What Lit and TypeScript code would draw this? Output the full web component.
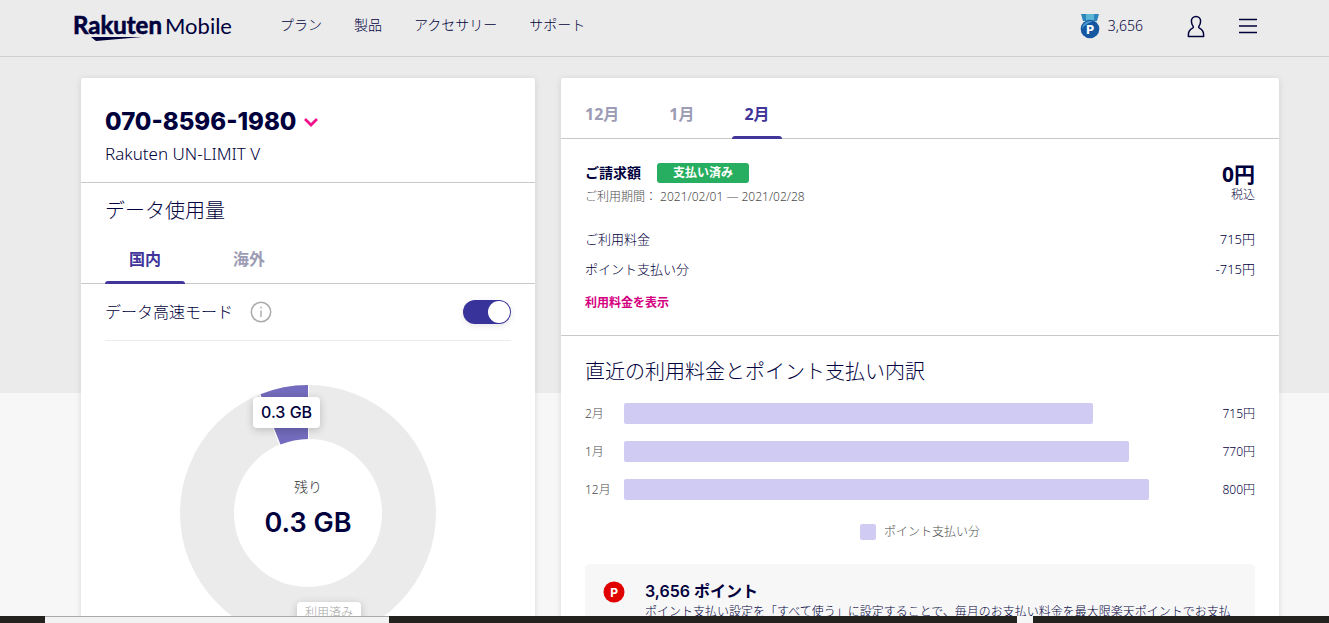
import { LitElement, html, css } from "lit";
import { customElement, state } from "lit/decorators.js";

const base = css`
  * { box-sizing: border-box; margin: 0; padding: 0; }
  :host {
    display: block;
    color: #00003c;
    font-family: "Noto Sans", "Noto Sans CJK JP", sans-serif;
    font-weight: 300;
  }
  button { border: 0; background: none; color: inherit; font: inherit; cursor: pointer; }
  a { color: inherit; text-decoration: none; }
  svg { display: block; flex: none; }
`;

const tabStyles = css`
  .tabs { display: flex; border-bottom: 1px solid #c8c8c8; }
  .tab {
    margin-bottom: -1px;
    border-bottom: 3px solid transparent;
    color: #9c9cb4;
    font-size: 16px;
    font-weight: 700;
    line-height: 24px;
  }
  .tab.active { color: #41359a; position: relative; }
  .tab.active::after {
    content: "";
    position: absolute;
    left: 0;
    right: 0;
    bottom: -3px;
    height: 3px;
    border-radius: 3px 3px 0 0;
    background: #41359a;
  }
`;

@customElement("site-header")
class SiteHeader extends LitElement {
  static styles = [base, css`
    .bar {
      display: flex;
      align-items: center;
      height: 57px;
      padding: 0 72px 4px 73px;
      background: #ebebeb;
      border-bottom: 1px solid #cfcfcf;
    }
    .logo-text { font-family: Lato, sans-serif; fill: #00003c; }
    .strong { font-size: 24px; font-weight: 700; }
    .light { font-size: 22px; font-weight: 400; }
    .nav { display: flex; gap: 32px; margin-left: 48px; padding-bottom: 2px; font-size: 14px; line-height: 20px; }
    .tools { display: flex; align-items: center; margin-left: auto; }
    .points { display: flex; align-items: center; gap: 8px; margin-right: 44px; font-size: 14px; line-height: 20px; }
    .menu { margin-left: 34px; }
  `];

  render() {
    return html`
      <header class="bar">
        <a href="#" aria-label="Rakuten Mobile">
          <svg width="159" height="34" viewBox="0 0 159 34">
            <text class="logo-text strong" x="0" y="25" stroke="#00003c" stroke-width=".6">Rakuten</text>
            <text class="logo-text light" x="92" y="25">Mobile</text>
            <path d="M18 28H69L23 32Z" fill="#00003c" />
          </svg>
        </a>
        <nav class="nav">
          ${["プラン", "製品", "アクセサリー", "サポート"].map((t) => html`<a href="#">${t}</a>`)}
        </nav>
        <div class="tools">
          <a class="points" href="#">
            <svg width="20" height="26" viewBox="0 0 20 26">
              <path d="M1 1h18l-2 7H3z" fill="#2d86bb" />
              <path d="M6 1h8v8H6z" fill="#5bb5d5" />
              <circle cx="10" cy="16" r="9.3" fill="#1557a0" />
              <path d="M2 16a8 8 0 0 1 11-7.400Q5 11 2 16z" fill="#4c9bd0" />
              <text x="6.300" y="20.500" font-family="Inter" font-size="12" font-weight="800" fill="#fff">P</text>
            </svg>
            <span>3,656</span>
          </a>
          <button aria-label="アカウント">
            <svg width="18" height="23" viewBox="0 0 18 23" fill="none" stroke="#00003c" stroke-width="1.500" stroke-linejoin="round">
              <path d="M6.200 11.500C4.600 9.500 4.400 7.500 4.400 6a4.600 4.600 0 0 1 9.200 0c0 1.500-.2 3.500-1.800 5.500-.3.700-.1 1.300.6 1.700 2.900 1.500 4.200 3 4.200 6.300V21.500H1.400V19.500c0-3.300 1.300-4.800 4.200-6.300.7-.4.900-1 .6-1.700z" />
            </svg>
          </button>
          <button class="menu" aria-label="メニュー">
            <svg width="18" height="16" viewBox="0 0 18 16" stroke="#00003c" stroke-width="1.600">
              <path d="M0 1.500H18M0 8H18M0 14.500H18" />
            </svg>
          </button>
        </div>
      </header>
    `;
  }
}

@customElement("usage-card")
class UsageCard extends LitElement {
  @state() region = "国内";
  @state() fast = true;

  static styles = [base, tabStyles, css`
    .plan { padding: 30px 24px 17px; border-bottom: 1px solid #c8c8c8; }
    .phone {
      display: flex;
      align-items: center;
      gap: 8px;
      font-family: Inter, sans-serif;
      font-size: 24px;
      font-weight: 800;
      line-height: 28px;
    }
    .plan-name { padding-top: 7px; font-size: 17px; line-height: 22px; }
    h2 { padding: 13px 24px 0; font-size: 20px; font-weight: 300; line-height: 30px; }
    .tabs { gap: 24px; padding: 21px 24px 0; }
    .tab { padding: 0 24px 10px; }
    .mode {
      display: flex;
      align-items: center;
      height: 57px;
      margin: 0 24px;
      border-bottom: 1px solid #ebebeb;
      font-size: 16px;
      line-height: 24px;
    }
    .info { margin-left: 17px; }
    .switch {
      display: flex;
      appearance: none;
      width: 48px;
      height: 24px;
      margin-left: auto;
      padding: 1px;
      border-radius: 12px;
      background: #9c9cb4;
      box-shadow: 0 2px 6px #0000001a;
    }
    .switch::before { content: ""; width: 22px; height: 22px; border-radius: 50%; background: #fff; }
    .switch:checked { justify-content: flex-end; background: #37339b; }
    .chart { position: relative; display: grid; place-items: center; width: 256px; margin: 44px auto 40px; }
    .chart > * { grid-area: 1 / 1; }
    .remaining { display: flex; flex-direction: column; align-items: center; gap: 8px; padding-bottom: 8px; }
    .caption { color: #3c3c3c; font-size: 14px; line-height: 20px; }
    .amount { font-family: Inter, sans-serif; font-size: 27px; font-weight: 600; line-height: 36px; }
    .tip {
      position: absolute;
      padding: 0 8px;
      border-radius: 4px;
      background: #fff;
      box-shadow: 0 2px 8px #00000033;
      white-space: nowrap;
    }
    .tip-left { left: 73px; top: 12px; font-family: Inter, sans-serif; font-size: 16px; font-weight: 500; line-height: 31px; }
    .tip-used { left: 117px; top: 217px; color: #a4a4a4; font-size: 12px; line-height: 22px; }
  `];

  render() {
    return html`
      <section class="plan">
        <button class="phone">
          <span>070-8596-1980</span>
          <svg width="14" height="10" viewBox="0 0 14 10" fill="none" stroke="#f0148c" stroke-width="2.800">
            <path d="M1 2L7 8L13 2" />
          </svg>
        </button>
        <p class="plan-name">Rakuten UN-LIMIT V</p>
      </section>
      <h2>データ使用量</h2>
      <div class="tabs" role="tablist">
        ${["国内", "海外"].map((t) => html`
          <button role="tab" class="tab ${t === this.region ? "active" : ""}" @click=${() => (this.region = t)}>${t}</button>
        `)}
      </div>
      <div class="mode">
        <label for="fast">データ高速モード</label>
        <button class="info" aria-label="詳細">
          <svg width="22" height="22" viewBox="0 0 22 22">
            <circle cx="11" cy="11" r="9.700" fill="none" stroke="#aaa" stroke-width="1.500" />
            <path d="M11 9.500V16M11 5.800V7.500" stroke="#aaa" stroke-width="1.400" />
          </svg>
        </button>
        <input id="fast" class="switch" type="checkbox" role="switch" .checked=${this.fast}
          @change=${(e: Event) => (this.fast = (e.target as HTMLInputElement).checked)} />
      </div>
      <div class="chart">
        <svg width="256" height="256" viewBox="0 0 256 256">
          <circle cx="128" cy="128" r="101" fill="none" stroke="#ebebeb" stroke-width="54" />
          <path d="M128 0A128 128 0 0 0 80.500 9.200L100.500 59.500A74 74 0 0 1 128 54Z" fill="#736bbd" />
          <path d="M79.500 9L99.800 60M128.500 0V54" stroke="#fff" />
        </svg>
        <div class="remaining">
          <span class="caption">残り</span>
          <strong class="amount">0.3 GB</strong>
        </div>
        <span class="tip tip-left">0.3 GB</span>
        <span class="tip tip-used">利用済み</span>
      </div>
    `;
  }
}

@customElement("billing-card")
class BillingCard extends LitElement {
  @state() month = "2月";

  history = [
    { month: "2月", yen: 715 },
    { month: "1月", yen: 770 },
    { month: "12月", yen: 800 },
  ];

  static styles = [base, tabStyles, css`
    .tabs { gap: 26px; padding: 24px 12px 0; }
    .tab { padding: 0 12px 10px; }
    .bill { padding: 24px 24px 23px; border-bottom: 1px solid #c8c8c8; }
    .summary { display: flex; justify-content: space-between; }
    .due { display: flex; align-items: center; gap: 16px; }
    h3 { font-size: 14px; font-weight: 700; line-height: 20px; }
    .badge {
      padding: 0 16px;
      border-radius: 3px;
      background: #27ae60;
      color: #fff;
      font-size: 12px;
      font-weight: 700;
      line-height: 20px;
    }
    .period { padding-top: 4px; color: #4c4c4c; font-size: 12px; line-height: 20px; }
    .total { text-align: right; font-size: 12px; line-height: 20px; }
    .total strong { display: block; font-size: 21px; font-weight: 700; line-height: 22px; }
    .lines { display: grid; gap: 10px; padding-top: 22px; font-size: 13px; line-height: 20px; }
    .line { display: flex; justify-content: space-between; }
    .detail { display: inline-block; padding-top: 15px; color: #d4007f; font-size: 12px; font-weight: 700; line-height: 18px; }
    .recent { padding: 21px 24px; }
    h2 { font-size: 20px; font-weight: 300; line-height: 30px; }
    .bars { display: grid; gap: 17px; padding-top: 16px; font-size: 12px; line-height: 21px; }
    .row { display: grid; grid-template-columns: 39px 1fr 106px; align-items: center; }
    .row-label { color: #4c4c4c; }
    .bar { height: 21px; border-radius: 2px; background: #cfcbf2; }
    .row-value { text-align: right; }
    .legend { display: flex; justify-content: center; align-items: center; gap: 8px; padding-top: 22px; color: #4c4c4c; font-size: 12px; line-height: 20px; }
    .swatch { width: 16px; height: 16px; border-radius: 2px; background: #cfcbf2; }
    .note { display: flex; gap: 20px; margin-top: 22px; padding: 17px 18px; border-radius: 4px; background: #f7f7f7; }
    .note h3 { font-family: Inter, "Noto Sans CJK JP", sans-serif; font-size: 16px; font-weight: 600; }
    .note p { font-size: 12px; line-height: 22px; }
  `];

  render() {
    return html`
      <div class="tabs" role="tablist">
        ${["12月", "1月", "2月"].map((t) => html`
          <button role="tab" class="tab ${t === this.month ? "active" : ""}" @click=${() => (this.month = t)}>${t}</button>
        `)}
      </div>
      <section class="bill">
        <div class="summary">
          <div>
            <div class="due"><h3>ご請求額</h3><span class="badge">支払い済み</span></div>
            <p class="period">ご利用期間： 2021/02/01 — 2021/02/28</p>
          </div>
          <p class="total"><strong>0円</strong>税込</p>
        </div>
        <div class="lines">
          <div class="line"><span>ご利用料金</span><span>715円</span></div>
          <div class="line"><span>ポイント支払い分</span><span>-715円</span></div>
        </div>
        <a class="detail" href="#">利用料金を表示</a>
      </section>
      <section class="recent">
        <h2>直近の利用料金とポイント支払い内訳</h2>
        <div class="bars">
          ${this.history.map((h) => html`
            <div class="row">
              <span class="row-label">${h.month}</span>
              <div><div class="bar" style="width:${(h.yen / 800) * 100}%"></div></div>
              <span class="row-value">${h.yen}円</span>
            </div>
          `)}
        </div>
        <div class="legend"><span class="swatch"></span><span>ポイント支払い分</span></div>
        <div class="note">
          <svg width="22" height="22" viewBox="0 0 22 22">
            <circle cx="11" cy="11" r="10.500" fill="#e00000" />
            <text x="7.300" y="15.500" font-family="Inter" font-size="12" font-weight="700" fill="#fff">P</text>
          </svg>
          <div>
            <h3>3,656 ポイント</h3>
            <p>ポイント支払い設定を「すべて使う」に設定することで、毎月のお支払い料金を最大限楽天ポイントでお支払</p>
          </div>
        </div>
      </section>
    `;
  }
}

@customElement("app-root")
class AppRoot extends LitElement {
  static styles = [base, css`
    .screen { display: flex; flex-direction: column; height: 100vh; overflow: hidden; }
    .page { flex: 1; min-height: 0; overflow: hidden; background: #f7f7f7; }
    .content {
      display: grid;
      grid-template-columns: 454fr 718fr;
      align-items: start;
      gap: 26px;
      padding: 21px 50px 40px 81px;
      background: linear-gradient(#ebebeb, #ebebeb) top / 100% 336px no-repeat;
    }
    .card { min-width: 0; min-height: 600px; border-radius: 2px; background: #fff; box-shadow: 0 1px 6px #0000001f; }
    .strip { display: flex; flex: none; height: 7px; background: #23221f; }
    .lead { width: 45px; }
    .light { width: 344px; border-top: 1px solid #aaa; background: #f2f2f2; }
    .fill { flex: 1; }
    .mark { width: 16px; background: #f5f5f5; }
    .tail { width: 296px; }
  `];

  render() {
    return html`
      <div class="screen">
        <div class="page">
          <site-header></site-header>
          <main class="content">
            <usage-card class="card"></usage-card>
            <billing-card class="card"></billing-card>
          </main>
        </div>
        <div class="strip">
          <span class="lead"></span><span class="light"></span><span class="fill"></span><span class="mark"></span><span class="tail"></span>
        </div>
      </div>
    `;
  }
}
